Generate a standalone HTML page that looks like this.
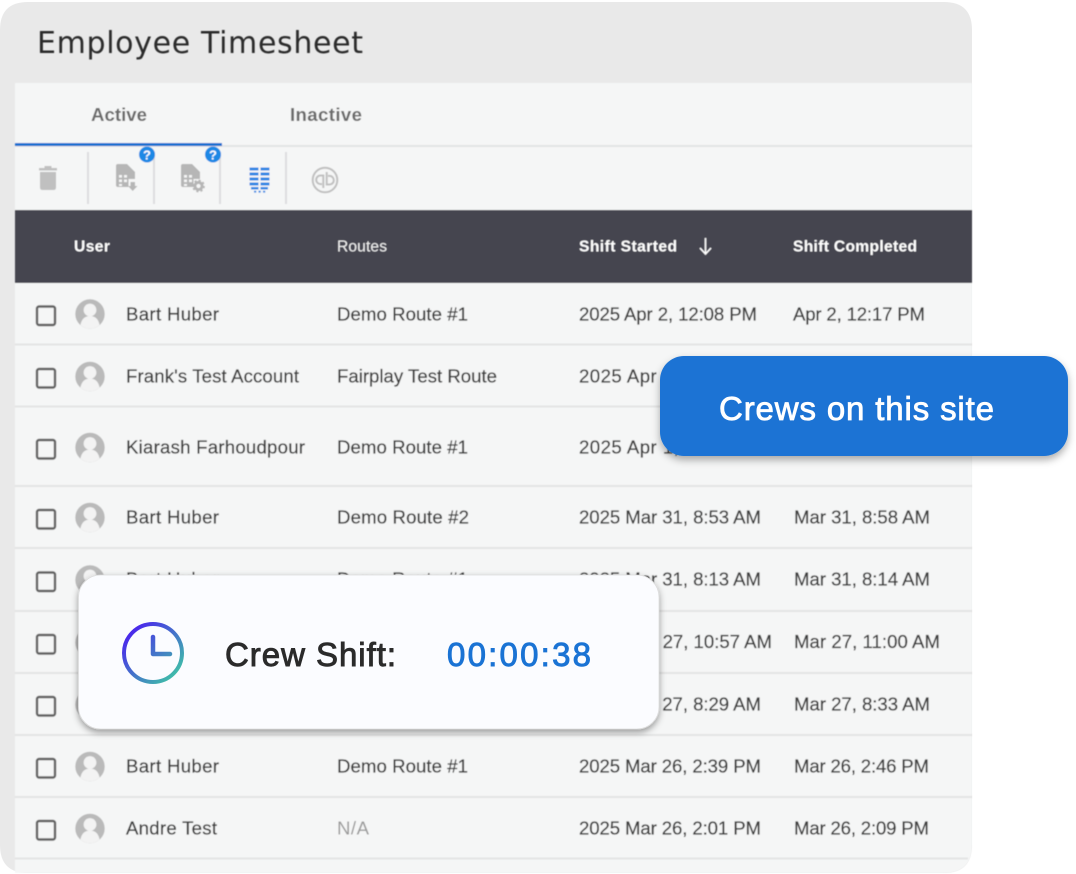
<!DOCTYPE html>
<html lang="en"><head><meta charset="utf-8"><title>Employee Timesheet</title>
<style>html,body{margin:0;padding:0;background:#fff}svg{display:block}
text{font-family:"Liberation Sans",Arial,sans-serif;font-kerning:normal}
.t{font-size:18.6px;fill:#3c3c3c;stroke:#3c3c3c;stroke-width:.25px}
.h{font-size:15.6px;fill:#fff;font-weight:bold}
</style></head><body>
<svg width="1076" height="874" viewBox="0 0 1076 874" xmlns="http://www.w3.org/2000/svg">
<defs>
<filter id="b" x="-2%" y="-2%" width="104%" height="104%"><feGaussianBlur stdDeviation=".45"/></filter>
<filter id="s1" x="-10%" y="-20%" width="120%" height="150%"><feDropShadow dx="0" dy="4" stdDeviation="4" flood-color="#000" flood-opacity=".32"/></filter>
<filter id="s2" x="-10%" y="-20%" width="120%" height="150%"><feDropShadow dx="0" dy="3" stdDeviation="3.5" flood-color="#000" flood-opacity=".38"/></filter>
<linearGradient id="g" x1="0" y1="0" x2="1" y2="1"><stop offset=".1" stop-color="#4a22ee"/><stop offset=".9" stop-color="#3fbfa8"/></linearGradient>
<linearGradient id="g2" gradientUnits="userSpaceOnUse" x1="122" y1="622" x2="184" y2="684"><stop offset=".1" stop-color="#4a22ee"/><stop offset=".9" stop-color="#3fbfa8"/></linearGradient>
<clipPath id="av"><circle cx="0" cy="0" r="14.7"/></clipPath>
<g id="r">
<rect x="-53" y="-7.500" width="18" height="18.500" rx="2" fill="none" stroke="#626262" stroke-width="2.400"/>
<g><circle r="14.700" fill="#bababa"/><g clip-path="url(#av)"><circle cy="-4" r="6.400" fill="#f3f3f3"/><path d="M-10 16C-10 5-5 2 0 2S10 5 10 16Z" fill="#f3f3f3"/></g></g>
</g>
<path id="doc" d="M2 0H11L19 8V15H12.500V23H2Q0 23 0 21V2Q0 0 2 0Z" fill="#b6b6b6"/>
<path id="cells" d="M3 11h3v2.600H3zM8 11h3v2.600H8zM3 15.500h3v2.600H3zM8 15.500h3v2.600H8zM3 20h3v2H3z" fill="#f5f6f6"/>
</defs>

<path d="M28 2H944Q972 2 972 30V845Q972 873 944 873H28Q0 873 0 845V30Q0 2 28 2Z" fill="#e9e9e9"/>
<g filter="url(#b)">
<path d="M15 83H972V845Q972 873 944 873H15Z" fill="#f5f6f6"/>
<text x="37" y="53" font-size="30" fill="#2b2b2b" textLength="326" style="font-family:'DejaVu Sans',sans-serif">Employee Timesheet</text>
<text x="91" y="121" font-size="18.600" font-weight="bold" fill="#6a6a6a" textLength="56">Active</text>
<text x="290" y="121" font-size="18.600" font-weight="bold" fill="#6a6a6a" textLength="72">Inactive</text>
<rect x="15" y="145" width="957" height="2" fill="#e2e3e3"/>
<rect x="15" y="143" width="207" height="3" fill="#1a6fd0"/>

<rect x="87" y="152" width="2" height="52" fill="#dcdcdf"/>
<rect x="153" y="152" width="2" height="52" fill="#dcdcdf"/>
<rect x="219" y="152" width="2" height="52" fill="#dcdcdf"/>
<rect x="285" y="152" width="2" height="52" fill="#dcdcdf"/>

<path d="M39 168H57V170.500H39ZM44.500 166H51.500V168H44.500ZM40 172H56V187.500Q56 190 53.500 190H42.500Q40 190 40 187.500Z" fill="#c0c0c0"/>

<use href="#doc" x="116" y="164"/><use href="#cells" x="116" y="164"/>
<path d="M130.500 182H135V186H137.500L132.700 191L128 186H130.500Z" fill="#b6b6b6"/>
<use href="#doc" x="181" y="164"/><use href="#cells" x="181" y="164"/>
<circle cx="198.500" cy="186" r="3.600" fill="none" stroke="#b6b6b6" stroke-width="3"/>
<circle cx="198.500" cy="186" r="5.500" fill="none" stroke="#b6b6b6" stroke-width="1.800" stroke-dasharray="2.200 2.100"/>

<circle cx="147" cy="154.500" r="8" fill="#1f88e5"/><text x="147" y="159.500" font-size="13" font-weight="bold" fill="#fff" text-anchor="middle">?</text>
<circle cx="213" cy="154.500" r="8" fill="#1f88e5"/><text x="213" y="159.500" font-size="13" font-weight="bold" fill="#fff" text-anchor="middle">?</text>

<path d="M249.500 167.500h9v3h-9zM260.500 167.500h9v3h-9zM249.500 172.500h9v3h-9zM260.500 172.500h9v3h-9zM249.500 177.500h9v3h-9zM260.500 177.500h9v3h-9zM249.500 182.500h9v3h-9zM260.500 182.500h9v3h-9zM251 187h7.500v2.500H251zM260.500 187h7.500v2.500h-7.500zM254 190.800h2.200v1.800H254zM258.500 190.800h2.200v1.800h-2.200zM263 190.800h2.200v1.800H263z" fill="#2d86e4"/>

<circle cx="325" cy="180" r="12.300" fill="none" stroke="#c0c0c0" stroke-width="2"/>
<path d="M323.300 188V175.500H320.500A4.300 4.300 0 0 0 320.500 184.100H322M326.700 172V184.500H329.500A4.300 4.300 0 0 0 329.500 175.900H328" fill="none" stroke="#c0c0c0" stroke-width="2"/>

<rect x="15" y="210" width="957" height="73" fill="#44444f"/>
<text class="h" x="74" y="251.500" textLength="36">User</text>
<text x="337" y="251.500" font-size="15.600" fill="#f0f0f0" textLength="50">Routes</text>
<text class="h" x="579" y="251.500" textLength="98">Shift Started</text>
<text class="h" x="793" y="251.500" textLength="124">Shift Completed</text>
<path d="M705.500 238V253M700 248L705.500 254L711 248" fill="none" stroke="#fff" stroke-width="1.600"/>

<g fill="#e3e4e4">
<rect x="15" y="343.500" width="957" height="2"/><rect x="15" y="405.500" width="957" height="2"/><rect x="15" y="485" width="957" height="2"/><rect x="15" y="547" width="957" height="2"/><rect x="15" y="610" width="957" height="2"/><rect x="15" y="672" width="957" height="2"/><rect x="15" y="734" width="957" height="2"/><rect x="15" y="796" width="957" height="2"/><rect x="15" y="857.500" width="953" height="2"/>
</g>

<use href="#r" x="90" y="314"/><use href="#r" x="90" y="376.500"/><use href="#r" x="90" y="447.500"/><use href="#r" x="90" y="517.500"/><use href="#r" x="90" y="580"/><use href="#r" x="90" y="642.500"/><use href="#r" x="90" y="704.500"/><use href="#r" x="90" y="766.500"/><use href="#r" x="90" y="828.500"/>

<text class="t" x="126" y="320.500" textLength="93">Bart Huber</text><text class="t" x="337" y="320.500" textLength="131">Demo Route #1</text><text class="t" x="579" y="320.500" textLength="178">2025 Apr 2, 12:08 PM</text><text class="t" x="793" y="320.500" textLength="132">Apr 2, 12:17 PM</text>
<text class="t" x="126" y="382.500" textLength="173">Frank's Test Account</text><text class="t" x="337" y="382.500" textLength="160">Fairplay Test Route</text><text class="t" x="579" y="382.500" textLength="178">2025 Apr 1, 4:31 PM</text>
<text class="t" x="126" y="453.500" textLength="179">Kiarash Farhoudpour</text><text class="t" x="337" y="453.500" textLength="131">Demo Route #1</text><text class="t" x="579" y="453.500" textLength="178">2025 Apr 1, 1:05 PM</text>
<text class="t" x="126" y="523.500" textLength="93">Bart Huber</text><text class="t" x="337" y="523.500" textLength="132">Demo Route #2</text><text class="t" x="579" y="523.500" textLength="182">2025 Mar 31, 8:53 AM</text><text class="t" x="794" y="523.500" textLength="136">Mar 31, 8:58 AM</text>
<text class="t" x="126" y="585.500" textLength="93">Bart Huber</text><text class="t" x="337" y="585.500" textLength="131">Demo Route #1</text><text class="t" x="579" y="585.500" textLength="182">2025 Mar 31, 8:13 AM</text><text class="t" x="794" y="585.500" textLength="136">Mar 31, 8:14 AM</text>
<text class="t" x="579" y="648" textLength="193">2025 Mar 27, 10:57 AM</text><text class="t" x="794" y="648" textLength="146">Mar 27, 11:00 AM</text>
<text class="t" x="579" y="710.500" textLength="182">2025 Mar 27, 8:29 AM</text><text class="t" x="794" y="710.500" textLength="136">Mar 27, 8:33 AM</text>
<text class="t" x="126" y="772.500" textLength="93">Bart Huber</text><text class="t" x="337" y="772.500" textLength="131">Demo Route #1</text><text class="t" x="579" y="772.500" textLength="182">2025 Mar 26, 2:39 PM</text><text class="t" x="794" y="772.500" textLength="135">Mar 26, 2:46 PM</text>
<text class="t" x="126" y="834.500" textLength="91">Andre Test</text><text x="337" y="834.500" font-size="18.600" fill="#9a9a9a" textLength="32">N/A</text><text class="t" x="579" y="834.500" textLength="182">2025 Mar 26, 2:01 PM</text><text class="t" x="794" y="834.500" textLength="135">Mar 26, 2:09 PM</text>
</g>

<rect x="660" y="356" width="408" height="100" rx="24" fill="#1a73d4" filter="url(#s1)"/>
<text x="719" y="420" font-size="33" fill="#fff" stroke="#fff" stroke-width=".8" textLength="275">Crews on this site</text>

<rect x="78.500" y="575" width="580.500" height="154" rx="22" fill="#fbfcff" stroke="#dcdcdc" stroke-width=".8" filter="url(#s2)"/>
<circle cx="153" cy="653" r="29" fill="none" stroke="url(#g)" stroke-width="4"/>
<path d="M153 637V654H170" fill="none" stroke="url(#g2)" stroke-width="4.500" stroke-linecap="round" stroke-linejoin="round"/>
<text x="225" y="666" font-size="33" fill="#2b2b2b" stroke="#2b2b2b" stroke-width=".9" textLength="171">Crew Shift:</text>
<text x="447" y="666" font-size="33" fill="#1a73d4" stroke="#1a73d4" stroke-width=".9" textLength="144">00:00:38</text>
</svg>
</body></html>
